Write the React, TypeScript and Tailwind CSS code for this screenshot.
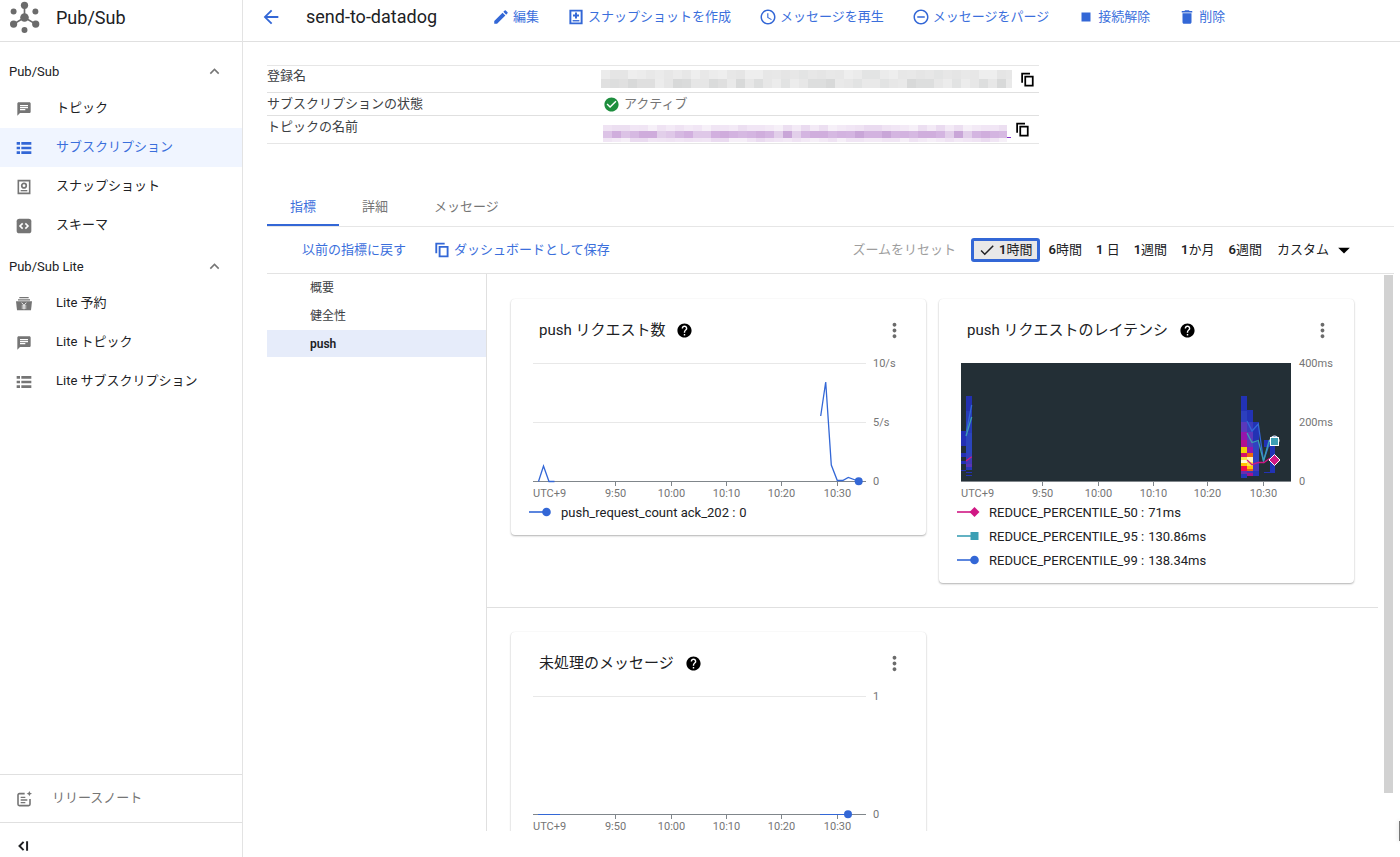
import React, { useState } from 'react';
import {
  MdAccessTime,
  MdArrowBack,
  MdArrowDropDown,
  MdChat,
  MdCheck,
  MdCheckCircle,
  MdDelete,
  MdEdit,
  MdExpandLess,
  MdHelp,
  MdMoreVert,
  MdRemoveCircleOutline,
  MdStop,
} from 'react-icons/md';

type IconProps = { className?: string };

// ---- Icons the package does not have ----

function PubSubLogo({ className }: IconProps) {
  return (
    <svg viewBox="0 0 100 100" className={className} fill="#6b6b6b" aria-hidden="true">
      <path d="M50 50V14M50 50L17 70M50 50L84 70" stroke="#6b6b6b" strokeWidth="5" />
      <circle cx="50" cy="50" r="13" />
      <circle cx="50" cy="13" r="11" />
      <circle cx="50" cy="88" r="9" />
      <circle cx="17" cy="32" r="9" />
      <circle cx="83" cy="32" r="9" />
      <circle cx="17" cy="70" r="11" />
      <circle cx="84" cy="70" r="11" />
    </svg>
  );
}

function ListIcon({ className }: IconProps) {
  return (
    <svg viewBox="0 0 24 24" className={className} fill="currentColor" aria-hidden="true">
      <path d="M1 3h5v4H1zM8 3h15v4H8zM1 10h5v4H1zM8 10h15v4H8zM1 17h5v4H1zM8 17h15v4H8z" />
    </svg>
  );
}

function SnapshotIcon({ className }: IconProps) {
  return (
    <svg viewBox="0 0 24 24" className={className} fill="none" stroke="currentColor" aria-hidden="true">
      <path d="M3.5 2.5h17v19h-17z" strokeWidth="2.4" />
      <circle cx="12" cy="10" r="3.4" strokeWidth="2.6" />
      <path d="M7 17.5h10" strokeWidth="2" />
    </svg>
  );
}

function SnapshotAddIcon({ className }: IconProps) {
  return (
    <svg viewBox="0 0 24 24" className={className} fill="none" stroke="currentColor" aria-hidden="true">
      <path d="M4.5 3.5h15v17h-15z" strokeWidth="2.6" />
      <path d="M12 6v8M8 10h8" strokeWidth="2.6" />
      <path d="M7.5 17h9" strokeWidth="1.8" />
    </svg>
  );
}

function SchemaIcon({ className }: IconProps) {
  return (
    <svg viewBox="0 0 24 24" className={className} fill="none" aria-hidden="true">
      <rect x="1" y="1" width="22" height="22" rx="4" fill="currentColor" />
      <path d="M10 8l-4 4 4 4M14 8l4 4-4 4" stroke="#fff" strokeWidth="2.4" />
    </svg>
  );
}

function ReservationIcon({ className }: IconProps) {
  return (
    <svg viewBox="0 0 24 24" className={className} fill="none" aria-hidden="true">
      <path d="M5 2.5h14M3 5.8h18" stroke="currentColor" strokeWidth="1.8" />
      <path d="M0 8h24l-1.5 13.5h-21z" fill="currentColor" />
      <path d="M8.5 10l3.5 4 3.5-4M12 13.5V20M8.5 15h7M8.5 18h7" stroke="#fff" strokeWidth="1.3" />
    </svg>
  );
}

function ReleaseNotesIcon({ className }: IconProps) {
  return (
    <svg viewBox="0 0 24 24" className={className} fill="none" stroke="currentColor" strokeWidth="2.4" aria-hidden="true">
      <path d="M13 4H5a2 2 0 0 0-2 2v14a2 2 0 0 0 2 2h14a2 2 0 0 0 2-2v-8" />
      <path d="M7 9.5h7M7 13.5h10M7 17.5h7" strokeWidth="2" />
      <path d="M20 0l1.2 2.8L24 4l-2.8 1.2L20 8l-1.2-2.8L16 4l2.8-1.2z" fill="currentColor" stroke="none" />
    </svg>
  );
}

function CollapseIcon({ className }: IconProps) {
  return (
    <svg viewBox="0 0 24 24" className={className} fill="none" stroke="currentColor" strokeWidth="3.4" aria-hidden="true">
      <path d="M13 5l-7 7 7 7M19 4v16" />
    </svg>
  );
}

function CopyIcon({ className }: IconProps) {
  return (
    <svg viewBox="0 0 24 24" className={className} fill="none" stroke="currentColor" strokeWidth="2.8" aria-hidden="true">
      <path d="M3.4 17V2.4H16" />
      <path d="M8.4 7.4h12v14.2h-12z" />
    </svg>
  );
}

// ---- Sidebar ----

interface NavItem {
  label: string;
  icon: React.ComponentType<IconProps>;
  active?: boolean;
}

const PUBSUB_ITEMS: NavItem[] = [
  { label: 'トピック', icon: MdChat },
  { label: 'サブスクリプション', icon: ListIcon, active: true },
  { label: 'スナップショット', icon: SnapshotIcon },
  { label: 'スキーマ', icon: SchemaIcon },
];

const LITE_ITEMS: NavItem[] = [
  { label: 'Lite 予約', icon: ReservationIcon },
  { label: 'Lite トピック', icon: MdChat },
  { label: 'Lite サブスクリプション', icon: ListIcon },
];

function NavSection({ title, items }: { title: string; items: NavItem[] }) {
  const [open, setOpen] = useState(true);

  return (
    <section>
      <button
        type="button"
        aria-expanded={open}
        onClick={() => setOpen(!open)}
        className="flex h-[39px] w-full items-center justify-between pt-1 pr-[18px] pl-[9px] text-[#202124]"
      >
        <span>{title}</span>
        <MdExpandLess className="size-[19px] text-[#757575]" />
      </button>
      {open && (
        <ul>
          {items.map(({ label, icon: Icon, active }) => (
            <li key={label}>
              <a
                href="#"
                aria-current={active ? 'page' : undefined}
                className={
                  active
                    ? 'flex h-[39px] items-center bg-[#f0f5ff] pl-4 text-[#3b6fdc]'
                    : 'flex h-[39px] items-center pl-4 text-[#202124]'
                }
              >
                <Icon className={active ? 'mr-6 size-4 text-[#3367d6]' : 'mr-6 size-4 text-[#757575]'} />
                <span className="pb-px">{label}</span>
              </a>
            </li>
          ))}
        </ul>
      )}
    </section>
  );
}

function Sidebar() {
  return (
    <aside className="flex w-[243px] shrink-0 flex-col border-r border-[#e3e3e3]">
      <div className="flex h-[42px] shrink-0 items-center border-b border-[#e0e0e0] pb-[6px] pl-2">
        <PubSubLogo className="mr-[15px] size-[33px]" />
        <span className="text-lg text-[#202124]">Pub/Sub</span>
      </div>
      <nav className="min-h-0 flex-1 overflow-hidden pt-2">
        <NavSection title="Pub/Sub" items={PUBSUB_ITEMS} />
        <NavSection title="Pub/Sub Lite" items={LITE_ITEMS} />
      </nav>
      <a href="#" className="flex h-12 shrink-0 items-center border-t border-[#e0e0e0] pl-4 text-[#757575]">
        <ReleaseNotesIcon className="mr-5 size-4" />
        <span className="pb-[2px]">リリースノート</span>
      </a>
      <button
        type="button"
        aria-label="メニューを閉じる"
        className="flex h-[35px] shrink-0 items-end border-t border-[#e0e0e0] pb-1 pl-4 text-[#202124]"
      >
        <CollapseIcon className="size-[14px]" />
      </button>
    </aside>
  );
}

// ---- Page header ----

const ACTIONS: { label: string; icon: React.ComponentType<IconProps> }[] = [
  { label: '編集', icon: MdEdit },
  { label: 'スナップショットを作成', icon: SnapshotAddIcon },
  { label: 'メッセージを再生', icon: MdAccessTime },
  { label: 'メッセージをパージ', icon: MdRemoveCircleOutline },
  { label: '接続解除', icon: MdStop },
  { label: '削除', icon: MdDelete },
];

function PageHeader() {
  return (
    <header className="flex h-[42px] shrink-0 items-center border-b border-[#e0e0e0] pb-[7px] pl-[17px] whitespace-nowrap">
      <button type="button" aria-label="戻る" className="mr-6 text-[#3367d6]">
        <MdArrowBack className="size-[22px]" />
      </button>
      <h1 className="text-lg text-[#202124]">send-to-datadog</h1>
      <div className="ml-[55px] flex gap-7">
        {ACTIONS.map(({ label, icon: Icon }) => (
          <button key={label} type="button" className="flex items-center gap-[3px] text-[#3b6fdc]">
            <Icon className="size-[18px] text-[#3367d6]" />
            <span className="pb-px">{label}</span>
          </button>
        ))}
      </div>
    </header>
  );
}

// ---- Subscription details ----

const GREY_SHADES = ['#e9e9e9', '#dfdfdf', '#e6e6e6', '#d8d9d9', '#e2e3e3', '#ececec', '#dadbdb', '#e4e4e4', '#dddede', '#e0e0e0', '#e7e7e7'];
const PALE_GREY_SHADES = ['#ebebeb', '#e7e7e7', '#e3e4e4', '#eeeeee', '#e8e8e8', '#e5e5e5', '#ececec'];
const PURPLE_SHADES = ['#d3b3e0', '#cfacdc', '#dfc8e8', '#d6b9e2', '#c9a6d8', '#e2cfea', '#d2b0df', '#d9bfe4', '#d0aedd', '#dcc3e6', '#d4b5e1'];
const LILAC_SHADES = ['#efe3f3', '#f3eaf6', '#eadbf0', '#f1e6f5', '#f6f0f8', '#ecdff1', '#f0e5f4'];

// Masked value, drawn as a strip of blocks
function Mosaic({ width, rows }: { width: number; rows: { height: number; shades: string[] }[] }) {
  const cell = 9;
  const total = rows.reduce((sum, row) => sum + row.height, 0);
  let y = 0;

  return (
    <svg width={width} height={total} className="shrink-0" aria-hidden="true">
      {rows.map((row, r) => {
        const top = y;
        y += row.height;
        return Array.from({ length: Math.ceil(width / cell) }, (_, i) => (
          <rect
            key={`${r}-${i}`}
            x={i * cell}
            y={top}
            width={cell}
            height={row.height}
            fill={row.shades[((i * 7919 + r * 31 + i * i * 13) % 101) % row.shades.length]}
          />
        ));
      })}
    </svg>
  );
}

function DetailsTable() {
  return (
    <table className="mt-[23px] w-full max-w-[772px] border-t border-[#e6e6e6] text-left text-[#3c4043]">
      <tbody>
        <tr className="h-[27px] border-b border-[#e0e0e0]">
          <th scope="row" className="w-[334px] align-top font-normal">登録名</th>
          <td>
            <div className="flex items-center gap-2">
              <Mosaic
                width={411}
                rows={[
                  { height: 9, shades: PALE_GREY_SHADES },
                  { height: 9, shades: GREY_SHADES },
                ]}
              />
              <button type="button" aria-label="登録名をコピー" className="text-black">
                <CopyIcon className="size-[15px]" />
              </button>
            </div>
          </td>
        </tr>
        <tr className="h-[23px] border-b border-[#e0e0e0]">
          <th scope="row" className="font-normal">サブスクリプションの状態</th>
          <td>
            <div className="flex items-center gap-1 pl-[2px] text-[#757575]">
              <MdCheckCircle className="size-[17px] text-[#1e8e3e]" />
              アクティブ
            </div>
          </td>
        </tr>
        <tr className="h-[28px] border-b border-[#e6e6e6]">
          <th scope="row" className="pt-px align-top font-normal">トピックの名前</th>
          <td>
            <div className="flex items-center pl-[2px]">
              <a href="#" aria-label="トピックを開く" className="flex items-end pt-2">
                <Mosaic
                  width={404}
                  rows={[
                    { height: 6, shades: LILAC_SHADES },
                    { height: 7, shades: PURPLE_SHADES },
                    { height: 4, shades: LILAC_SHADES },
                  ]}
                />
                <span className="mb-1 h-px w-1 bg-[#8430ce]" />
              </a>
              <button type="button" aria-label="トピックの名前をコピー" className="ml-1 text-black">
                <CopyIcon className="size-[15px]" />
              </button>
            </div>
          </td>
        </tr>
      </tbody>
    </table>
  );
}

// ---- Tabs and toolbar ----

const TABS = ['指標', '詳細', 'メッセージ'];
const RANGES: [string, string][] = [
  ['1', '時間'],
  ['6', '時間'],
  ['1 ', '日'],
  ['1', '週間'],
  ['1', 'か月'],
  ['6', '週間'],
];

function Tabs() {
  const [tab, setTab] = useState(0);

  return (
    <div role="tablist" className="mt-[45px] flex h-[38px] shrink-0 border-b border-[#e6e6e6]">
      {TABS.map((label, i) => (
        <button
          key={label}
          type="button"
          role="tab"
          aria-selected={tab === i}
          onClick={() => setTab(i)}
          className={
            tab === i
              ? 'border-b-2 border-[#3367d6] px-[23px] pt-px text-[#3b6fdc]'
              : 'border-b-2 border-transparent px-[23px] pt-px text-[#757575]'
          }
        >
          {label}
        </button>
      ))}
    </div>
  );
}

function Toolbar() {
  const [range, setRange] = useState(0);

  return (
    <div className="flex h-[47px] shrink-0 items-center border-b border-[#e3e3e3] pr-9 pl-[35px] whitespace-nowrap">
      <button type="button" className="mr-7 text-[#3b6fdc]">以前の指標に戻す</button>
      <button type="button" className="flex items-center gap-1 text-[#3b6fdc]">
        <CopyIcon className="size-4 text-[#3367d6]" />
        ダッシュボードとして保存
      </button>
      <button type="button" disabled className="mr-[15px] ml-auto text-[#9e9e9e]">ズームをリセット</button>
      {RANGES.map(([count, unit], i) => (
        <button
          key={count + unit}
          type="button"
          aria-pressed={range === i}
          onClick={() => setRange(i)}
          className={
            range === i
              ? 'mr-[2px] flex h-6 items-center rounded-[3px] border-[3px] border-[#3367d6] bg-[#e8e8e8] px-1 text-[#202124]'
              : 'h-6 px-[7px] text-[#202124]'
          }
        >
          {range === i && <MdCheck className="mr-[3px] size-[18px]" />}
          <span>
            <span className="font-semibold whitespace-pre">{count}</span>
            {unit}
          </span>
        </button>
      ))}
      <label className="flex items-center pl-2 text-[#202124]">
        <select aria-label="期間" className="appearance-none bg-transparent">
          <option>カスタム</option>
        </select>
        <MdArrowDropDown className="size-7 text-black" />
      </label>
    </div>
  );
}

// ---- Charts ----

const GROUPS = ['概要', '健全性', 'push'];

interface Tick {
  x: number;
  label: string;
}

const LINE_TICKS: Tick[] = [
  { x: 104.5, label: '9:50' },
  { x: 160.5, label: '10:00' },
  { x: 215.5, label: '10:10' },
  { x: 270.5, label: '10:20' },
  { x: 326.5, label: '10:30' },
];

const HEAT_TICKS: Tick[] = [
  { x: 103.5, label: '9:50' },
  { x: 159.5, label: '10:00' },
  { x: 214.5, label: '10:10' },
  { x: 268.5, label: '10:20' },
  { x: 324.5, label: '10:30' },
];

function TimeAxis({ ticks, end }: { ticks: Tick[]; end: number }) {
  return (
    <g>
      <path d={`M22 130.5H${end}`} stroke="#80868b" />
      <text x="22" y="146" fill="#757575">UTC+9</text>
      {ticks.map((t) => (
        <g key={t.label}>
          <path d={`M${t.x} 130v5`} stroke="#80868b" />
          <text x={t.x} y="146" textAnchor="middle" fill="#757575">{t.label}</text>
        </g>
      ))}
    </g>
  );
}

function ChartSvg({ label, children }: { label: string; children: React.ReactNode }) {
  return (
    <svg viewBox="0 0 415 150" className="block w-full text-[11px]" role="img" aria-label={label}>
      {children}
    </svg>
  );
}

function RequestCountChart() {
  return (
    <ChartSvg label="push リクエスト数">
      <path d="M22 12.5H355M22 71.5H355" stroke="#e8e8e8" />
      <TimeAxis ticks={LINE_TICKS} end={355} />
      <g fill="#757575">
        <text x="362" y="16">10/s</text>
        <text x="362" y="75">5/s</text>
        <text x="362" y="134">0</text>
      </g>
      <g fill="none" stroke="#3367d6" strokeWidth="1.3">
        <path d="M27.5 130.5L32.5 115L38 130.5H43.5" />
        <path d="M309.7 65L314.7 31L320.3 114L326.3 129.5H331.7L337.3 126.5L347 130" />
      </g>
      <circle cx="347.7" cy="130.3" r="4" fill="#3367d6" />
    </ChartSvg>
  );
}

function UnackedChart() {
  return (
    <ChartSvg label="未処理のメッセージ">
      <path d="M22 12.5H355" stroke="#e8e8e8" />
      <TimeAxis ticks={LINE_TICKS} end={355} />
      <g fill="#757575">
        <text x="362" y="16">1</text>
        <text x="362" y="134">0</text>
      </g>
      <path d="M27 130.5H49M309 130.5H337" stroke="#3367d6" />
      <circle cx="337" cy="130.3" r="4" fill="#3367d6" />
    </ChartSvg>
  );
}

// x, y, width, height, colour
const HEAT_CELLS: [number, number, number, number, string][] = [
  [22, 80, 5, 15, '#2330b4'],
  [22, 101.5, 5, 4, '#2330b4'],
  [22, 110, 5, 3, '#2330b4'],
  [22, 118.5, 5, 1.5, '#2330b4'],
  [27, 44.5, 6, 15, '#2230b0'],
  [27, 59.5, 6, 22, '#263cb8'],
  [27, 81.5, 6, 20, '#2b45bd'],
  [27, 101.5, 6, 6, '#3340bb'],
  [27, 107.5, 6, 5, '#4338b4'],
  [27, 112.5, 6, 3.5, '#5a35b4'],
  [27, 116, 6, 2.5, '#2838b8'],
  [27, 120.5, 6, 1.5, '#2330b4'],
  [27, 124, 6, 1, '#2330b4'],
  [302, 44.5, 6, 15, '#2232b4'],
  [302, 59.5, 6, 11, '#2c3fbe'],
  [302, 70.5, 6, 10, '#5a38bb'],
  [302, 80.5, 6, 8.5, '#9516ac'],
  [302, 89, 6, 6.5, '#b3108f'],
  [302, 95.5, 6, 6, '#f2d500'],
  [302, 101.5, 6, 4.5, '#d6106a'],
  [302, 106, 6, 3, '#f5e84a'],
  [302, 109, 6, 2.5, '#fffbd0'],
  [302, 111.5, 6, 3, '#ffc400'],
  [302, 114.5, 6, 5, '#f20a48'],
  [302, 119.5, 6, 3, '#6a2cb0'],
  [302, 122.5, 6, 4, '#2438b8'],
  [308, 58.5, 6, 12, '#2232b4'],
  [308, 70.5, 6, 10, '#3a3cbc'],
  [308, 80.5, 6, 15, '#5a38bb'],
  [308, 95.5, 6, 6, '#9516ac'],
  [308, 101.5, 6, 4.5, '#f06a0a'],
  [308, 106, 6, 5, '#fff6b8'],
  [308, 111, 6, 3.5, '#ffe04a'],
  [308, 114.5, 6, 3.5, '#ffc400'],
  [308, 118, 6, 2, '#e8641a'],
  [308, 120, 6, 2, '#4338b4'],
  [308, 122, 6, 2.5, '#a5128f'],
  [314, 70.5, 5.5, 20, '#2232b4'],
  [314, 90.5, 5.5, 20, '#2f43c0'],
  [314, 110.5, 5.5, 9, '#4a38b8'],
  [314, 119.5, 5.5, 5, '#2636b8'],
  [325, 89, 5.5, 6.5, '#2232b4'],
  [325, 120.5, 5.5, 1.5, '#2232b4'],
  [330.5, 89, 5.5, 33, '#2232b4'],
];

function LatencyChart() {
  return (
    <ChartSvg label="push リクエストのレイテンシ">
      <rect x="22" y="12" width="330" height="118" fill="#232f36" />
      <g shapeRendering="crispEdges">
        {HEAT_CELLS.map(([x, y, w, h, fill]) => (
          <rect key={`${x}-${y}`} x={x} y={y} width={w} height={h} fill={fill} />
        ))}
      </g>
      <TimeAxis ticks={HEAT_TICKS} end={352} />
      <g fill="#757575">
        <text x="360" y="16">400ms</text>
        <text x="360" y="75">200ms</text>
        <text x="360" y="134">0</text>
      </g>
      <g fill="none" strokeWidth="1.3">
        <path d="M27.5 80.5L32.7 54M308 70L313 80L319.3 73L324.5 110L330.5 92L335.3 89" stroke="#3367d6" />
        <path d="M27 85L32.7 66M308 82L313 91.5L319.3 89.5L324.5 110L330 90L335.3 91" stroke="#3c9fb4" />
        <path d="M27 110L32.7 105.7M308 109L313 113.7L319.3 111.5H325L330.5 107.5L335.3 109" stroke="#d01884" />
      </g>
      <circle cx="335.5" cy="89.5" r="4.5" fill="#3367d6" stroke="#fff" />
      <rect x="331.500" y="86.5" width="8" height="8" fill="#3c9fb4" stroke="#fff" />
      <path d="M335.5 103.5l5.5 5.5-5.5 5.5-5.5-5.5z" fill="#d01884" stroke="#fff" />
    </ChartSvg>
  );
}

interface LegendEntry {
  name: string;
  value: string;
  color: string;
  shape: 'circle' | 'square' | 'diamond';
}

const COUNT_LEGEND: LegendEntry[] = [
  { name: 'push_request_count ack_202', value: '0', color: '#3367d6', shape: 'circle' },
];

const LATENCY_LEGEND: LegendEntry[] = [
  { name: 'REDUCE_PERCENTILE_50', value: '71ms', color: '#d01884', shape: 'diamond' },
  { name: 'REDUCE_PERCENTILE_95', value: '130.86ms', color: '#3c9fb4', shape: 'square' },
  { name: 'REDUCE_PERCENTILE_99', value: '138.34ms', color: '#3367d6', shape: 'circle' },
];

function LegendMarker({ color, shape }: { color: string; shape: LegendEntry['shape'] }) {
  return (
    <svg width="24" height="12" viewBox="0 0 24 12" fill={color} className="mb-[2px]" aria-hidden="true">
      <path d="M0 6h14" stroke={color} strokeWidth="1.6" />
      {shape === 'circle' && <circle cx="17.5" cy="6" r="4.3" />}
      {shape === 'square' && <rect x="13.5" y="2" width="8" height="8" />}
      {shape === 'diamond' && <path d="M17.5 1l5 5-5 5-5-5z" />}
    </svg>
  );
}

interface ChartCardProps {
  title: string;
  legend?: LegendEntry[];
  children: React.ReactNode;
}

function ChartCard({ title, legend = [], children }: ChartCardProps) {
  return (
    <article className="rounded bg-white pb-[10px] shadow-[0_1px_2px_rgba(0,0,0,0.3),0_0_1px_rgba(0,0,0,0.08)]">
      <div className="flex h-[52px] items-center pt-[10px] pr-5 pl-7">
        <h2 className="text-[15px] text-[#202124]">{title}</h2>
        <button type="button" aria-label="ヘルプ" className="ml-[11px] text-black">
          <MdHelp className="size-[17px]" />
        </button>
        <button type="button" aria-label="その他" className="ml-auto text-[#6b6b6b]">
          <MdMoreVert className="size-[23px]" />
        </button>
      </div>
      {children}
      <ul className="text-[#202124]">
        {legend.map((entry) => (
          <li key={entry.name} className="flex h-6 items-center pl-[18px]">
            <LegendMarker color={entry.color} shape={entry.shape} />
            <span className="ml-2">{entry.name} :</span>
            <span className="ml-1">{entry.value}</span>
          </li>
        ))}
      </ul>
    </article>
  );
}

function MetricsPanel() {
  const [group, setGroup] = useState(2);

  return (
    <div className="flex min-h-0 flex-1">
      <ul className="flex w-[220px] shrink-0 flex-col gap-px border-r border-[#e0e0e0] text-xs">
        {GROUPS.map((label, i) => (
          <li key={label}>
            <button
              type="button"
              onClick={() => setGroup(i)}
              className={
                group === i
                  ? 'h-[27px] w-full bg-[#e6ecfa] pl-[43px] text-left font-semibold text-[#202124]'
                  : 'h-[27px] w-full pl-[43px] text-left text-[#3c4043]'
              }
            >
              {label}
            </button>
          </li>
        ))}
      </ul>
      <div className="min-w-0 flex-1 overflow-hidden">
        <div className="grid grid-cols-2 items-start gap-[13px] border-b border-[#e0e0e0] px-6 pt-[25px] pb-6">
          <ChartCard title="push リクエスト数" legend={COUNT_LEGEND}>
            <RequestCountChart />
          </ChartCard>
          <ChartCard title="push リクエストのレイテンシ" legend={LATENCY_LEGEND}>
            <LatencyChart />
          </ChartCard>
        </div>
        <div className="grid grid-cols-2 items-start gap-[13px] px-6 py-6">
          <ChartCard title="未処理のメッセージ">
            <UnackedChart />
          </ChartCard>
        </div>
      </div>
      {/* scroll thumb */}
      <div className="mt-px mr-px mb-[38px] ml-[6px] w-[9px] shrink-0 bg-[#d2d2d2]" />
    </div>
  );
}

export default function App() {
  return (
    <div className="relative flex h-screen overflow-hidden bg-white font-['Roboto','Noto_Sans_CJK_JP',sans-serif] text-[13px] leading-5">
      <Sidebar />
      <main className="flex min-w-0 flex-1 flex-col">
        <PageHeader />
        <div className="flex min-h-0 flex-1 flex-col pr-[6px] pb-[26px] pl-6">
          <DetailsTable />
          <Tabs />
          <Toolbar />
          <MetricsPanel />
        </div>
      </main>
      {/* edge of the closed side panel */}
      <div className="absolute right-0 bottom-4 h-5 w-px bg-[#777777] shadow-[0_0_4px_rgba(0,0,0,0.3)]" />
    </div>
  );
}
